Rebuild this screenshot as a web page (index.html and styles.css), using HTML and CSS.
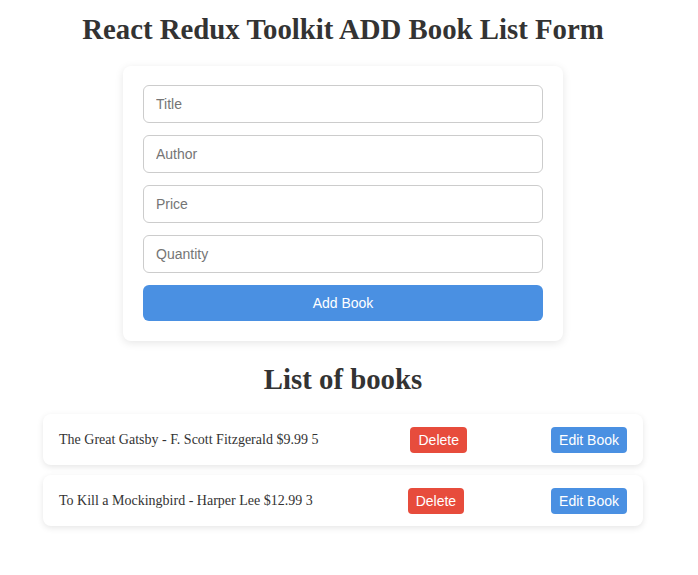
FILE: index.html
```html
<!DOCTYPE html>
<html lang="en">
<head>
<meta charset="utf-8">
<title>React Redux Toolkit ADD Book List Form</title>
<link rel="stylesheet" href="styles.css">
</head>
<body>
<div class="app">
  <h1 class="title">React Redux Toolkit ADD Book List Form</h1>
  <form class="card">
    <input class="field" type="text" placeholder="Title">
    <input class="field" type="text" placeholder="Author">
    <input class="field" type="text" placeholder="Price">
    <input class="field" type="text" placeholder="Quantity">
    <button class="btn-add" type="button">Add Book</button>
  </form>
  <h2 class="subtitle">List of books</h2>
  <ul class="book-list">
    <li class="book">
      <span class="book-text">The Great Gatsby - F. Scott Fitzgerald $9.99 5</span>
      <button class="btn btn-delete" type="button">Delete</button>
      <button class="btn btn-edit" type="button">Edit Book</button>
    </li>
    <li class="book">
      <span class="book-text">To Kill a Mockingbird - Harper Lee $12.99 3</span>
      <button class="btn btn-delete" type="button">Delete</button>
      <button class="btn btn-edit" type="button">Edit Book</button>
    </li>
  </ul>
</div>
</body>
</html>
```
FILE: styles.css
```css
html, body {
  margin: 0;
  padding: 0;
  background: #fff;
}
body {
  font-family: "Liberation Serif", "Times New Roman", serif;
  color: #333;
}
.app {
  width: 686px;
  display: flex;
  flex-direction: column;
  align-items: center;
  padding-top: 13px;
  padding-bottom: 20px;
}
.title {
  margin: 0;
  font-size: 28.8px;
  line-height: 32px;
  font-weight: bold;
  color: #333;
  text-align: center;
}
.card {
  margin-top: 21px;
  width: 400px;
  padding: 19px 20px 20px;
  background: #fff;
  border-radius: 8px;
  box-shadow: 0 2px 8px rgba(0, 0, 0, 0.1);
  display: flex;
  flex-direction: column;
  gap: 12px;
}
.field {
  box-sizing: border-box;
  width: 100%;
  height: 38px;
  padding: 10px 12px;
  border: 1px solid #ccc;
  border-radius: 6px;
  font-family: "Liberation Sans", Arial, sans-serif;
  font-size: 14px;
  color: #333;
  outline: none;
}
.field::placeholder {
  color: #757575;
}
.btn-add {
  height: 36px;
  border: none;
  border-radius: 6px;
  background: #4a90e2;
  color: #fff;
  font-family: "Liberation Sans", Arial, sans-serif;
  font-size: 14px;
  cursor: pointer;
}
.subtitle {
  margin: 22px 0 0;
  font-size: 28.8px;
  line-height: 32px;
  font-weight: bold;
  text-align: center;
  color: #333;
}
.book-list {
  list-style: none;
  margin: 19px 0 0;
  padding: 0;
  width: 600px;
  display: flex;
  flex-direction: column;
  gap: 10px;
}
.book {
  display: flex;
  align-items: center;
  justify-content: space-between;
  height: 51px;
  box-sizing: border-box;
  padding: 0 16px;
  background: #fff;
  border-radius: 8px;
  box-shadow: 0 2px 6px rgba(0, 0, 0, 0.1);
  font-size: 14px;
}
.btn {
  height: 26px;
  padding: 0 8px;
  border: none;
  border-radius: 4px;
  color: #fff;
  font-family: "Liberation Sans", Arial, sans-serif;
  font-size: 14px;
  cursor: pointer;
}
.btn-delete {
  background: #e74c3c;
  margin-left: 8px;
}
.btn-edit {
  background: #4a90e2;
}
```
